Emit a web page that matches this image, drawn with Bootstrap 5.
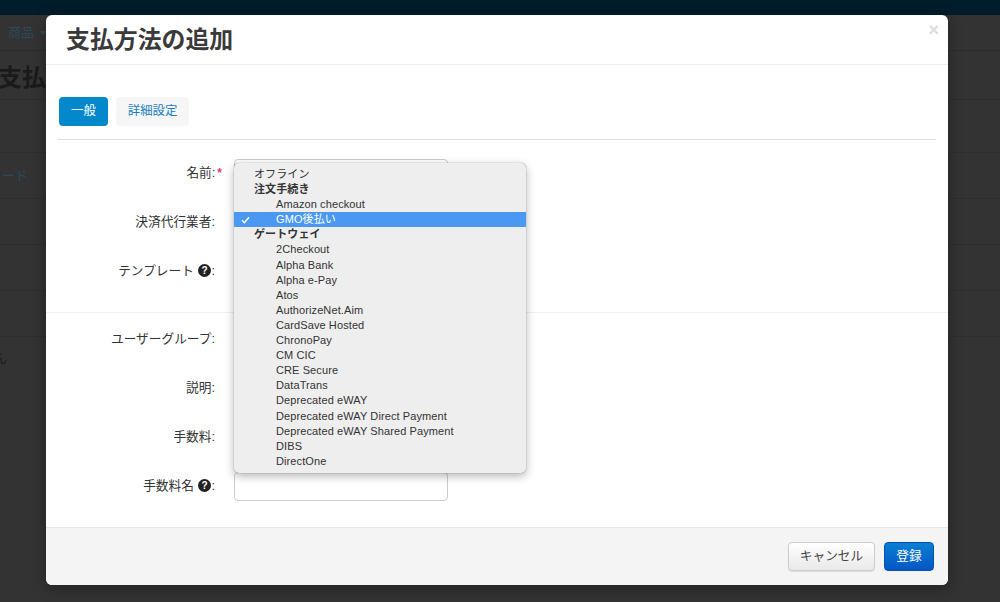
<!DOCTYPE html>
<html lang="ja">
<head>
<meta charset="utf-8">
<title>支払方法の追加</title>
<link href="https://cdn.jsdelivr.net/npm/bootstrap@5.3.0/dist/css/bootstrap.min.css" rel="stylesheet">
<style>
html,body{height:602px;overflow:hidden;}
body{position:relative;background:#333;font-family:"Liberation Sans","Noto Sans CJK JP",sans-serif;font-size:13px;color:#333;}
.topbar{height:15px;background:#011d2b;}
.bgnav{height:36px;padding:9px 8px;color:#2a4a5c;border-bottom:1px solid #2c2c2c;font-size:13px;line-height:18px;}
.bgcaret{display:inline-block;border-top:4px solid #2a4a5c;border-left:4px solid transparent;border-right:4px solid transparent;margin-left:5px;vertical-align:2px;}
.bgtitle{height:49px;font-size:24px;font-weight:700;color:#1a1a1a;line-height:54px;white-space:nowrap;overflow:hidden;border-bottom:1px solid #2e2e2e;margin-left:-2px;}
.bgrow{height:46px;border-bottom:1px solid #2e2e2e;color:#2a4a5c;line-height:46px;white-space:nowrap;padding-left:2px;}
.bgtall{height:53px;}
.bgnote{color:#1a1a1a;line-height:44px;margin-left:-6px;}
.dialog{position:absolute;left:46px;top:15px;width:902px;height:570px;border:0;border-radius:6px;background:#fff;color:#333;box-shadow:0 3px 14px rgba(0,0,0,.35);}
.dialog .modal-header{height:50px;padding:0 20px;border-bottom:1px solid #eee;position:relative;}
.dialog .modal-title{font-size:23.9px;font-weight:700;color:#3a3a3a;line-height:50px;}
.closex{position:absolute;right:9px;top:5px;font-size:18px;font-weight:700;color:#dcdcdc;line-height:20px;}
.dialog .modal-body{padding:32px 12px 0 12px;flex:1 1 auto;position:relative;}
.tabbar{gap:8px;padding:0 1px 13px;border-bottom:1px solid #ddd;margin-bottom:19px;}
.tabbtn{display:block;height:29px;line-height:29px;padding:0 12px;border-radius:4px;font-size:12.4px;color:#1a7fc0;background:#f6f6f6;text-decoration:none;}
.tabbtn.on{background:#0388cc;color:#fff;}
.fieldrow{display:flex;align-items:center;height:29px;margin-bottom:20px;}
.fieldrow.gapend{margin-bottom:26px;}
.fieldname{width:157px;padding-top:1px;text-align:right;white-space:nowrap;color:#333;font-size:12.7px;flex:none;}
.reqmark{color:#e6396a;margin-left:2px;font-size:12px;font-weight:700;}
.fieldname.req{width:164px;margin-right:-7px;}
.fieldbox{width:214px;height:29px;margin-left:19px;border:1px solid #ccc;border-radius:4px;background:#fff;flex:none;}
.sep{height:1px;background:#f1f1f1;margin:0 -12px 12px;}
.helpicon{width:13px;height:13px;vertical-align:-2px;margin-left:1px;}
.dialog .modal-footer{height:58px;padding:0 14px 0 0;background:#f4f4f4;border-top:1px solid #e8e8e8;border-radius:0 0 6px 6px;flex-shrink:0;gap:9px;}
.dialog .modal-footer>*{margin:0;}
.cancelbtn{width:87px;height:29px;padding:0;font-size:12.7px;color:#444;border:1px solid #ccc;border-radius:4px;background:linear-gradient(#fff,#e9e9e9);box-shadow:0 1px 1px rgba(0,0,0,.1);}
.savebtn{width:50px;height:29px;padding:0;font-size:12.7px;color:#fff;border:1px solid #0450b0;border-radius:4px;background:linear-gradient(#0a80d2,#0456c4);}
.picker{position:absolute;left:188px;top:98px;width:292px;height:310px;padding:4px 0 0;background:#eee;border-radius:5px;box-shadow:0 0 1px rgba(0,0,0,.5),0 3px 10px rgba(0,0,0,.3);font-size:11px;color:#333;}
.pick{height:15.1px;line-height:15.1px;padding-left:42px;white-space:nowrap;letter-spacing:.1px;position:relative;}
.pick.head{padding-left:20px;}
.pick.grp{padding-left:20px;font-weight:700;}
.pick.sel{background:#4a98f2;color:#fff;}
.tick{position:absolute;left:7px;top:4px;width:9px;height:8px;}
</style>
</head>
<body>
<div class="topbar"></div>
<div class="bgnav">商品<span class="bgcaret"></span></div>
<div class="bgtitle">支払方法</div>
<div class="bgrow bgtall"></div>
<div class="bgrow">ード</div>
<div class="bgrow"></div>
<div class="bgrow"></div>
<div class="bgrow"></div>
<div class="bgnote">ん</div>

<div class="modal-content dialog">
  <div class="modal-header">
    <h3 class="modal-title">支払方法の追加</h3>
    <span class="closex">×</span>
  </div>
  <div class="modal-body">
    <div class="d-flex tabbar">
      <a class="tabbtn on" href="#">一般</a>
      <a class="tabbtn" href="#">詳細設定</a>
    </div>
    <div class="fieldrow"><div class="fieldname req">名前:<span class="reqmark">*</span></div><div class="fieldbox"></div></div>
    <div class="fieldrow"><div class="fieldname">決済代行業者:</div><div class="fieldbox"></div></div>
    <div class="fieldrow gapend"><div class="fieldname">テンプレート <svg class="helpicon" viewBox="0 0 13 13"><circle cx="6.5" cy="6.5" r="6.5" fill="#222"/><text x="6.5" y="10" text-anchor="middle" font-size="10" font-weight="700" fill="#fff" font-family="Liberation Sans">?</text></svg>:</div><div class="fieldbox"></div></div>
    <div class="sep"></div>
    <div class="fieldrow"><div class="fieldname">ユーザーグループ:</div><div class="fieldbox"></div></div>
    <div class="fieldrow"><div class="fieldname">説明:</div><div class="fieldbox"></div></div>
    <div class="fieldrow"><div class="fieldname">手数料:</div><div class="fieldbox"></div></div>
    <div class="fieldrow"><div class="fieldname">手数料名 <svg class="helpicon" viewBox="0 0 13 13"><circle cx="6.5" cy="6.5" r="6.5" fill="#222"/><text x="6.5" y="10" text-anchor="middle" font-size="10" font-weight="700" fill="#fff" font-family="Liberation Sans">?</text></svg>:</div><div class="fieldbox"></div></div>
    <div class="picker">
      <div class="pick head">オフライン</div>
      <div class="pick grp">注文手続き</div>
      <div class="pick">Amazon checkout</div>
      <div class="pick sel"><svg class="tick" viewBox="0 0 9 8"><path d="M1 4.2 3.4 6.6 8 1.2" fill="none" stroke="#fff" stroke-width="1.4"/></svg>GMO後払い</div>
      <div class="pick grp">ゲートウェイ</div>
      <div class="pick">2Checkout</div>
      <div class="pick">Alpha Bank</div>
      <div class="pick">Alpha e-Pay</div>
      <div class="pick">Atos</div>
      <div class="pick">AuthorizeNet.Aim</div>
      <div class="pick">CardSave Hosted</div>
      <div class="pick">ChronoPay</div>
      <div class="pick">CM CIC</div>
      <div class="pick">CRE Secure</div>
      <div class="pick">DataTrans</div>
      <div class="pick">Deprecated eWAY</div>
      <div class="pick">Deprecated eWAY Direct Payment</div>
      <div class="pick">Deprecated eWAY Shared Payment</div>
      <div class="pick">DIBS</div>
      <div class="pick">DirectOne</div>
    </div>
  </div>
  <div class="modal-footer">
    <button type="button" class="btn cancelbtn">キャンセル</button>
    <button type="button" class="btn savebtn">登録</button>
  </div>
</div>
<script src="https://cdn.jsdelivr.net/npm/bootstrap@5.3.0/dist/js/bootstrap.bundle.min.js"></script>
</body>
</html>
